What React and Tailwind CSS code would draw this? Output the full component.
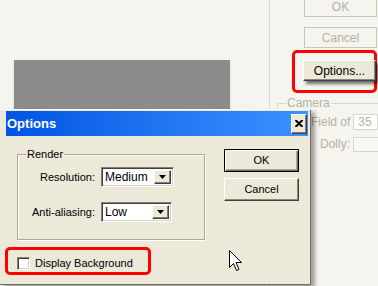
import React from "react"

const font = "font-['Liberation_Sans',Arial,sans-serif]"

const BgButton = ({ children, disabled = false, className = "" }) => (
  <div
    className={`w-[73px] h-[21px] flex items-center justify-center text-[12px] border ${
      disabled
        ? "border-[#c9c7bb] text-[#b5b2a4] bg-[#f5f4ee]"
        : "border-t-white border-l-white border-r-[#404040] border-b-[#404040] bg-[#ece9d8] text-black shadow-[inset_-1px_-1px_0_#8a8778,3px_3px_3px_rgba(0,0,0,0.55)]"
    } ${className}`}
  >
    {children}
  </div>
)

const DlgButton = ({ children, isDefault = false }) => (
  <div
    className={`w-[75px] h-[23px] flex items-center justify-center text-[11px] text-black bg-[#ece9d8] ${
      isDefault
        ? "border border-black shadow-[inset_1px_1px_0_white,inset_-1px_-1px_0_#716f64,inset_-2px_-2px_0_#aca899]"
        : "border border-t-white border-l-white border-r-[#404040] border-b-[#404040] shadow-[inset_-1px_-1px_0_#8a8778]"
    }`}
  >
    {children}
  </div>
)

const Combo = ({ value, width = "w-[73px]" }) => (
  <div
    className={`${width} h-[20px] flex items-stretch bg-white border border-t-[#808080] border-l-[#808080] border-r-white border-b-white shadow-[inset_1px_1px_0_#404040,inset_-1px_-1px_0_#d4d0c8]`}
  >
    <div className="flex-1 pl-[3px] pt-[1px] text-[12px] leading-[16px] text-black">{value}</div>
    <div className="w-[17px] m-[2px] ml-0 bg-[#ece9d8] flex items-center justify-center border border-t-white border-l-white border-r-[#404040] border-b-[#404040] shadow-[inset_-1px_-1px_0_#808080]">
      <svg width="7" height="4" viewBox="0 0 7 4">
        <path d="M0 0H7L3.5 4Z" fill="#000" />
      </svg>
    </div>
  </div>
)

const Cursor = () => (
  <svg width="13" height="21" viewBox="0 0 13 21" className="absolute left-[229px] top-[250px]">
    <path
      d="M0.5 0.5V17.5L4.5 13.5L7.5 20.5L10 19.5L7 12.5H12.5Z"
      fill="white"
      stroke="black"
      strokeWidth="1"
      strokeLinejoin="miter"
    />
  </svg>
)

export default function App() {
  return (
    <div className={`relative w-[378px] h-[286px] overflow-hidden bg-[#f5f4ee] ${font}`}>
      {/* background window */}
      <div className="flex h-full">
        <div className="w-[270px] shrink-0 border-r border-[#dcd9ce] pt-[60px] pl-[14px]">
          <div className="w-[216px] h-[49px] bg-[#8c8c8c] shadow-[0_2px_2px_rgba(0,0,0,0.15)]" />
        </div>

        <div className="flex-1 min-w-0 flex flex-col">
          <BgButton disabled className="ml-[34px] -mt-[4px] border-[#a5a397]">
            OK
          </BgButton>
          <BgButton disabled className="ml-[34px] mt-[10px]">
            Cancel
          </BgButton>

          <div className="ml-[22px] mt-[2px] w-[85px] h-[43px] border-[3px] border-[#ff0000] rounded-[5px] pl-[8px] pt-[7px]">
            <BgButton>Options...</BgButton>
          </div>

          <div className="relative ml-[7px] mt-[10px] h-[60px] border-l border-t border-[#d8d6cc] rounded-tl-[2px]">
            <span className="absolute -top-[8px] left-[8px] px-[1px] bg-[#f5f4ee] text-[12px] leading-[14px] text-[#b5b2a4]">
              Camera
            </span>
            <div className="flex items-center mt-[9px] ml-[33px] gap-[3px] whitespace-nowrap">
              <span className="text-[12px] text-[#b5b2a4]">Field of</span>
              <div className="shrink-0 w-[25px] h-[16px] border border-[#d8d6cc] bg-white pl-[4px] text-[12px] leading-[14px] text-[#b5b2a4]">
                35
              </div>
              <div className="shrink-0 w-[10px] h-[16px] border border-[#d8d6cc]" />
            </div>
            <div className="flex items-center mt-[4px] ml-[42px] gap-[3px] whitespace-nowrap">
              <span className="text-[12px] text-[#b5b2a4]">Dolly:</span>
              <div className="shrink-0 w-[26px] h-[15px] border border-[#d8d6cc] bg-[#f9f8f4]" />
            </div>
          </div>
        </div>
      </div>

      {/* Options dialog */}
      <div className="absolute left-0 top-[109px] w-[311px] h-[176px] bg-[#ece9d8] border-t border-t-white border-r border-r-[#716f64] border-b border-b-[#716f64] shadow-[4px_3px_4px_rgba(0,0,0,0.35)] flex flex-col">
        <div className="ml-[6px] mt-[1px] w-[302px] h-[25px] flex items-center justify-between bg-gradient-to-r from-[#0054e3] to-[#3b92ff]">
          <span className="pl-[1px] text-[13px] font-bold text-white leading-none">Options</span>
          <div className="mr-[1px] w-[16px] h-[20px] bg-[#ece9d8] flex items-center justify-center border border-t-white border-l-white border-r-[#404040] border-b-[#404040] shadow-[inset_-1px_-1px_0_#808080]">
            <svg width="8" height="7" viewBox="0 0 8 7">
              <path d="M0.5 0L4 3.5L7.5 0M0.5 7L4 3.5L7.5 7" stroke="black" strokeWidth="2" fill="none" />
            </svg>
          </div>
        </div>

        <div className="flex pl-[17px]">
          <div className="relative mt-[18px] w-[188px] h-[86px] border border-[#a9a796] shadow-[inset_1px_1px_0_white,1px_1px_0_white]">
            <span className="absolute -top-[7px] left-[8px] px-[1px] bg-[#ece9d8] text-[11px] leading-[13px] text-black">
              Render
            </span>
            <div className="grid grid-cols-[77px_auto] items-center gap-x-[6px] gap-y-[15px] mt-[12px]">
              <span className="text-right text-[11px] text-black">Resolution:</span>
              <Combo value="Medium" />
              <span className="text-right text-[11px] text-black">Anti-aliasing:</span>
              <Combo value="Low" width="w-[71px]" />
            </div>
          </div>

          <div className="ml-[19px] mt-[13px] flex flex-col gap-[6px]">
            <DlgButton isDefault>OK</DlgButton>
            <DlgButton>Cancel</DlgButton>
          </div>
        </div>

        <div className="ml-[5px] mt-[7px] w-[146px] h-[28px] border-[3px] border-[#ff0000] rounded-[5px] flex items-start pl-[9px] pt-[7px]">
          <div className="w-[13px] h-[13px] bg-white border border-t-[#808080] border-l-[#808080] border-r-white border-b-white shadow-[inset_1px_1px_0_#404040,inset_-1px_-1px_0_#d4d0c8]" />
          <span className="ml-[5px] text-[11px] leading-[13px] text-black">Display Background</span>
        </div>
      </div>

      <Cursor />
    </div>
  )
}
